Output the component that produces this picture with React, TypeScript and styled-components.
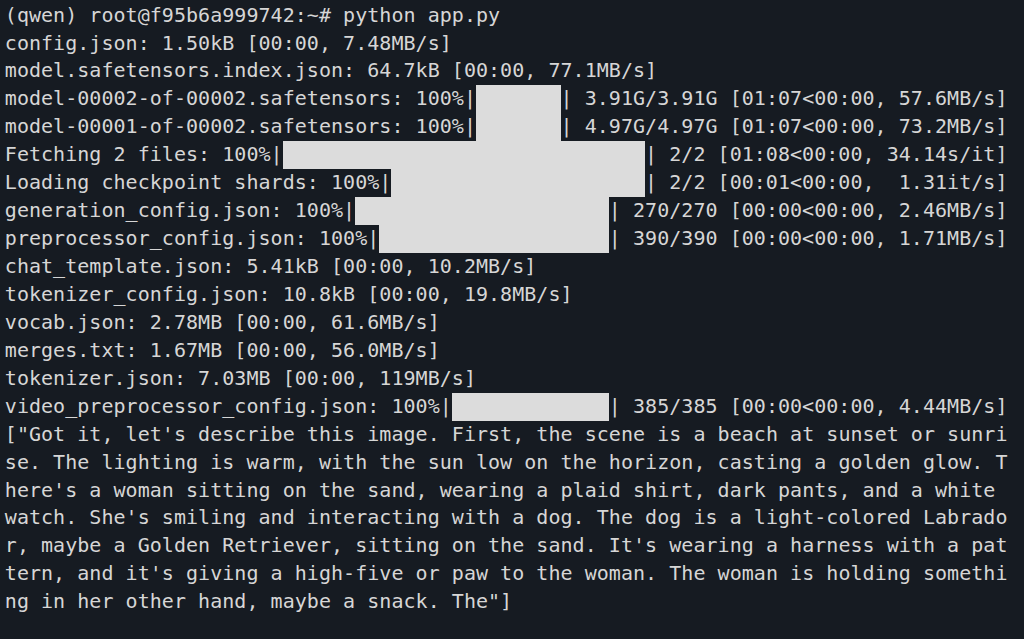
import React from "react";
import styled, { createGlobalStyle } from "styled-components";

const CW = 12.08;
const LH = 27.95;

const Global = createGlobalStyle`
  html, body {
    margin: 0;
    padding: 0;
    background: #161b22;
  }
  body {
    width: 1024px;
    height: 639px;
    overflow: hidden;
  }
`;

const Terminal = styled.div`
  box-sizing: border-box;
  width: 1024px;
  height: 639px;
  background: #161b22;
  color: #d6d6d6;
  font-family: "DejaVu Sans Mono", "Liberation Mono", monospace;
  font-size: 20px;
  letter-spacing: 0.04px;
  line-height: ${LH}px;
  padding: 1.6px 0 0 4.8px;
  display: flex;
  flex-direction: column;
`;

const Line = styled.div`
  height: ${LH}px;
  white-space: pre;
  display: flex;
  align-items: flex-start;
`;

const Bar = styled.span<{ $cols: number }>`
  display: inline-block;
  width: ${(p) => p.$cols * CW}px;
  height: ${LH}px;
  background: #dcdcdc;
  flex: none;
`;

type Row = string | [string, number, string];

const rows: Row[] = [
  "(qwen) root@f95b6a999742:~# python app.py",
  "config.json: 1.50kB [00:00, 7.48MB/s]",
  "model.safetensors.index.json: 64.7kB [00:00, 77.1MB/s]",
  ["model-00002-of-00002.safetensors: 100%|", 7, "| 3.91G/3.91G [01:07<00:00, 57.6MB/s]"],
  ["model-00001-of-00002.safetensors: 100%|", 7, "| 4.97G/4.97G [01:07<00:00, 73.2MB/s]"],
  ["Fetching 2 files: 100%|", 30, "| 2/2 [01:08<00:00, 34.14s/it]"],
  ["Loading checkpoint shards: 100%|", 21, "| 2/2 [00:01<00:00,  1.31it/s]"],
  ["generation_config.json: 100%|", 21, "| 270/270 [00:00<00:00, 2.46MB/s]"],
  ["preprocessor_config.json: 100%|", 19, "| 390/390 [00:00<00:00, 1.71MB/s]"],
  "chat_template.json: 5.41kB [00:00, 10.2MB/s]",
  "tokenizer_config.json: 10.8kB [00:00, 19.8MB/s]",
  "vocab.json: 2.78MB [00:00, 61.6MB/s]",
  "merges.txt: 1.67MB [00:00, 56.0MB/s]",
  "tokenizer.json: 7.03MB [00:00, 119MB/s]",
  ["video_preprocessor_config.json: 100%|", 13, "| 385/385 [00:00<00:00, 4.44MB/s]"],
  "[\"Got it, let's describe this image. First, the scene is a beach at sunset or sunri",
  "se. The lighting is warm, with the sun low on the horizon, casting a golden glow. T",
  "here's a woman sitting on the sand, wearing a plaid shirt, dark pants, and a white ",
  "watch. She's smiling and interacting with a dog. The dog is a light-colored Labrado",
  "r, maybe a Golden Retriever, sitting on the sand. It's wearing a harness with a pat",
  "tern, and it's giving a high-five or paw to the woman. The woman is holding somethi",
  "ng in her other hand, maybe a snack. The\"]",
];

export default function App() {
  return (
    <>
      <Global />
      <Terminal>
        {rows.map((r, i) =>
          typeof r === "string" ? (
            <Line key={i}>{r}</Line>
          ) : (
            <Line key={i}>
              <span>{r[0]}</span>
              <Bar $cols={r[1]} />
              <span>{r[2]}</span>
            </Line>
          )
        )}
      </Terminal>
    </>
  );
}
